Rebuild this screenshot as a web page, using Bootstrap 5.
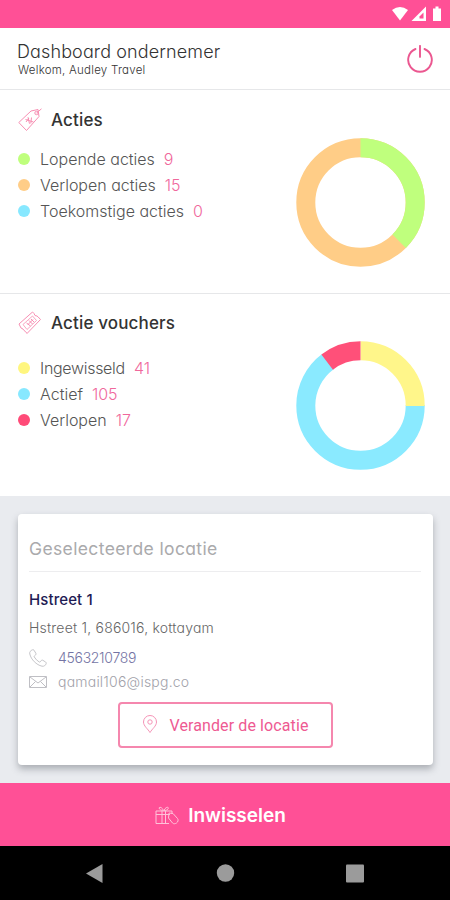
<!DOCTYPE html>
<html lang="nl">
<head>
<meta charset="utf-8">
<meta name="viewport" content="width=device-width, initial-scale=1">
<title>Dashboard ondernemer</title>
<link href="https://cdn.jsdelivr.net/npm/bootstrap@5.3.0/dist/css/bootstrap.min.css" rel="stylesheet">
<style>
  :root { --pink: #ff5096; --rose: #f0689c; }
  body { font-family: Inter, "Open Sans", sans-serif; font-feature-settings: "cv11"; color: #333; background: #fff; }
  svg { display: block; flex: none; }
  .status { height: 28px; background: var(--pink); padding-right: 8px; }
  .topbar { height: 62px; border-bottom: 1px solid #e6e7e9; padding: 0 17px 0 17px; }
  .title { font-size: 18px; line-height: 22px; font-weight: 300; letter-spacing: .12px; padding-top: 2px; }
  .welcome { font-size: 11.5px; line-height: 15px; font-weight: 300; letter-spacing: .25px; padding-left: 1px; }
  .stats { height: 204px; padding: 0 25px 0 18px; }
  .stats.first { border-bottom: 1px solid #e6e7e9; }
  .stats.second { height: 202px; }
  .heading { font-size: 17px; line-height: 24px; font-weight: 500; padding-top: 18px; gap: 9px; letter-spacing: .15px; }
  .second .heading { padding-top: 17px; }
  .legend { font-size: 16px; line-height: 26px; font-weight: 300; color: #555; padding-top: 14px; letter-spacing: 0; }
  .second .legend { padding-top: 20px; }
  .legend li { gap: 9px; }
  .legend b { font-weight: 300; color: var(--rose); }
  .redeemed { letter-spacing: -.3px; }
  .dot { width: 12px; height: 12px; border-radius: 50%; margin: 0 1px 0 0; flex: none; }
  .ring { padding-top: 48px; }
  .second .ring { padding-top: 47px; }
  .place { height: 287px; background: #e9ebef; padding: 18px 17px 18px 18px; }
  .place .card { height: 251px; border-radius: 4px; padding: 0 12px 0 11px; box-shadow: 0 4px 7px rgba(70,75,85,.38); }
  .card-head { height: 58px; padding-top: 23px; border-bottom: 1px solid #ededef; font-size: 17.5px; line-height: 24px; color: #aaaaac; letter-spacing: .37px; }
  .store { font-size: 15px; line-height: 20px; font-weight: 500; color: #1e1b54; margin-top: 18px; letter-spacing: .1px; }
  .address { font-size: 14px; line-height: 20px; font-weight: 300; color: #666; margin-top: 8px; letter-spacing: .2px; }
  .contact { font-size: 14px; line-height: 20px; font-weight: 300; gap: 11px; }
  .phone { color: #7474a4; margin-top: 10px; letter-spacing: -.3px; }
  .mail { color: #a2a2aa; margin-top: 4px; letter-spacing: .22px; }
  .btn-place { width: 215px; height: 46px; border: 2px solid #f587ae; border-radius: 4px; color: #ee5a92; font: 400 16px/20px Roboto, sans-serif; gap: 12px; margin-top: 10px; letter-spacing: .1px; }
  .btn-place span { padding-top: 2px; }
  .redeem { height: 63px; background: var(--pink); color: #fff; font-size: 19px; font-weight: 600; gap: 9px; padding: 8px 21px 6px 12px; border-radius: 0; border: 0; }
  .redeem span { padding-top: 1px; }
  .sysnav { height: 54px; background: #000; }
</style>
</head>
<body>
<main class="d-flex flex-column">
  <div class="status d-flex justify-content-end align-items-center">
    <svg width="50" height="28" viewBox="0 0 50 28" fill="#fff">
      <path d="M0 10Q8 4 16 10L8 20.500Z"/>
      <path d="M34 6.500V21H19.500Z"/><path d="M31.500 12.500V18.500H27.500V16.500Z" fill="#ff5096"/>
      <path d="M41 8.500h2.500V6.500h3v2H49V21h-8z"/>
    </svg>
  </div>
  <header class="topbar d-flex justify-content-between align-items-center">
    <div>
      <div class="title">Dashboard ondernemer</div>
      <div class="welcome">Welkom, Audley Travel</div>
    </div>
    <svg width="26" height="28" viewBox="0 0 26 28" fill="none" stroke="#eb5790" stroke-width="1.900" stroke-linecap="round"><path d="M8.500 4A11.800 11.800 0 1 0 17.500 4M13 .9v11"/></svg>
  </header>

  <section class="stats first d-flex justify-content-between">
    <div>
      <div class="heading d-flex align-items-center">
        <svg width="24" height="24" viewBox="0 0 24 24" fill="none" stroke="#f78fb3" stroke-width="1"><path d="M.8 14.500 13 3l7-1.500L21 8.500 8.500 22.500Z"/><circle cx="18.500" cy="5" r="1.700"/><path d="M18.500 5 23.500 .8M7.500 11.500l8 2.500M10 9.200l1.500 6.500M13.500 9.500l-.7 6M8 14l3-4"/></svg>
        <span>Acties</span>
      </div>
      <ul class="legend list-unstyled mb-0">
        <li class="d-flex align-items-center"><i class="dot" style="background:#bfff7d"></i><span>Lopende acties</span><b>9</b></li>
        <li class="d-flex align-items-center"><i class="dot" style="background:#ffcd87"></i><span>Verlopen acties</span><b>15</b></li>
        <li class="d-flex align-items-center"><i class="dot" style="background:#87e8ff"></i><span>Toekomstige acties</span><b>0</b></li>
      </ul>
    </div>
    <div class="ring">
      <svg width="129" height="129" viewBox="0 0 129 129" fill="none" stroke-width="19"><g transform="rotate(-90 64.500 64.500)"><circle cx="64.500" cy="64.500" r="54.700" stroke="#ffcd87"/><circle cx="64.500" cy="64.500" r="54.700" stroke="#bfff7d" pathLength="24" stroke-dasharray="9 15"/></g></svg>
    </div>
  </section>

  <section class="stats second d-flex justify-content-between">
    <div>
      <div class="heading d-flex align-items-center">
        <svg width="24" height="24" viewBox="0 0 24 24" fill="none" stroke="#f78fb3" stroke-width="1"><path d="M1 13 14.500 1l1.500 1.500 1 2 2 .5 1.200 1 2.300 2.500L9 22.500l-1.500-2-1.500-1-1-1.500-2-1Z"/><path d="M5 13.500 14.500 5l4 4.500L9 18.500Z" stroke-width=".8"/><path d="m8.500 12 4 3M11 9.500l3.500 3.500M13 8l3 3M10 13.500l5-5"/></svg>
        <span>Actie vouchers</span>
      </div>
      <ul class="legend list-unstyled mb-0">
        <li class="d-flex align-items-center"><i class="dot" style="background:#fff67f"></i><span class="redeemed">Ingewisseld</span><b>41</b></li>
        <li class="d-flex align-items-center"><i class="dot" style="background:#87e8ff"></i><span>Actief</span><b>105</b></li>
        <li class="d-flex align-items-center"><i class="dot" style="background:#ff4b78"></i><span>Verlopen</span><b>17</b></li>
      </ul>
    </div>
    <div class="ring">
      <svg width="129" height="129" viewBox="0 0 129 129" fill="none" stroke-width="19"><g transform="rotate(-90 64.500 64.500)"><circle cx="64.500" cy="64.500" r="54.700" stroke="#8aeaff" pathLength="163" stroke-dasharray="106 57" stroke-dashoffset="-40.500"/><circle cx="64.500" cy="64.500" r="54.700" stroke="#fff68a" pathLength="163" stroke-dasharray="41 122"/><circle cx="64.500" cy="64.500" r="54.700" stroke="#ff5079" pathLength="163" stroke-dasharray="17 146" stroke-dashoffset="17"/></g></svg>
    </div>
  </section>

  <section class="place">
    <div class="card border-0">
      <div class="card-head">Geselecteerde locatie</div>
      <div class="store">Hstreet 1</div>
      <div class="address">Hstreet 1, 686016, kottayam</div>
      <div class="contact phone d-flex align-items-center">
        <svg width="18" height="18" viewBox="0 0 18 18" fill="none" stroke="#bebec3" stroke-width=".9"><path d="M3.500.8C1.500 1.500.3 3 .8 5 2 10.500 7.500 16 13 17.200c2 .4 3.500-.7 4.200-2.700.2-.6 0-1-.5-1.400l-3-1.900c-.6-.3-1-.2-1.400.3l-1 1.300c-.4.4-.7.4-1.200.1-2-1.200-3.600-2.900-4.800-4.900-.3-.5-.2-.9.200-1.200L6.700 5.800c.4-.4.500-.8.200-1.400L5 1.200C4.600.7 4.100.6 3.500.8Z"/></svg>
        <span>4563210789</span>
      </div>
      <div class="contact mail d-flex align-items-center">
        <svg width="18" height="12" viewBox="0 0 18 12" fill="none" stroke="#b8b8bd" stroke-width=".9"><path d="M.5.500h17v11H.5ZM1 1l8 6 8-6M1 11l5.500-5.500M17 11l-5.500-5.500"/></svg>
        <span>qamail106@ispg.co</span>
      </div>
      <button class="btn btn-place d-flex align-items-center justify-content-center mx-auto p-0">
        <svg width="16" height="20" viewBox="0 0 16 20" fill="none" stroke="#f593b6" stroke-width="1"><path d="M8 17.500C6 14 1.500 11 1.500 7a6.500 6.500 0 0 1 13 0c0 4-4.500 7-6.500 10.500Z"/><circle cx="8" cy="7" r="2.200"/></svg>
        <span>Verander de locatie</span>
      </button>
    </div>
  </section>

  <button class="redeem btn d-flex align-items-center justify-content-center">
    <svg width="24" height="20" viewBox="0 0 24 20" fill="none" stroke="#ffc2d9" stroke-width="1"><path d="M1 5h16v3M1 5v12.500h13M1 8.500h14M7 5v12.500M10.500 5v12.500M8.500 4.500C7 .5 3 .5 4.500 3c1 1.200 2.500 1.500 4 1.500ZM9 4.500c1.500-4 5.500-4 4-1.500-1 1.200-2.500 1.500-4 1.500Z"/><path d="m14 7 4 .5 4.500 5c1.200 1.500.5 3.500-1 4.500-1.500 1-3 1-4 0L13.500 12Z"/></svg>
    <span>Inwisselen</span>
  </button>
  <nav class="sysnav d-flex align-items-center justify-content-between">
    <svg width="450" height="54" viewBox="0 0 450 54" fill="#9b9b9b"><path d="M86 27.500 102.500 18v19Z"/><circle cx="225.500" cy="27" r="8.700"/><rect x="346" y="18.500" width="18" height="18" rx="1"/></svg>
  </nav>
</main>
<script src="https://cdn.jsdelivr.net/npm/bootstrap@5.3.0/dist/js/bootstrap.bundle.min.js"></script>
</body>
</html>
